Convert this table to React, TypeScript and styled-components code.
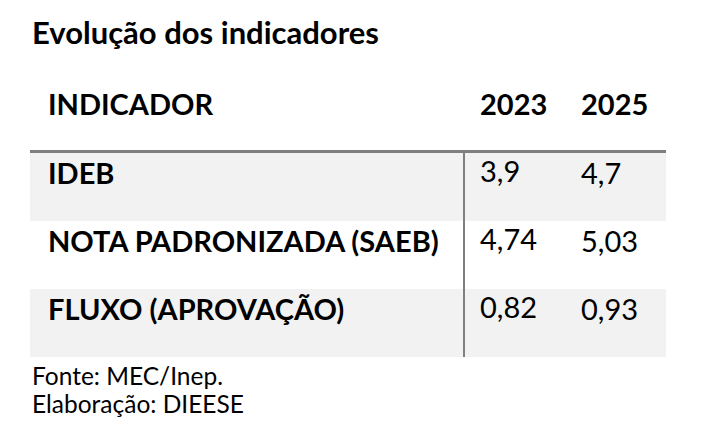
import React from 'react';
import styled, { createGlobalStyle } from 'styled-components';

const GlobalStyle = createGlobalStyle`
	html, body {
		margin: 0;
		padding: 0;
		background: #ffffff;
	}

	body {
		font-family: Lato, "Open Sans", "Liberation Sans", sans-serif;
		color: #000000;
	}
`;

const COLUMNS = '433px 101px 102px';

const Page = styled.main`
	width: 636px;
	padding: 15px 0 0 30px;
`;

const Title = styled.h1`
	margin: 0;
	padding-left: 2px;
	font-size: 31px;
	line-height: 35px;
	font-weight: 700;
`;

const Table = styled.div`
	display: flex;
	flex-direction: column;
`;

const Row = styled.div<{ $shaded?: boolean; $head?: boolean }>`
	display: grid;
	grid-template-columns: ${COLUMNS};
	box-sizing: border-box;
	height: ${props => (props.$head ? '103px' : '68px')};
	padding-top: ${props => (props.$head ? '36px' : '2px')};
	background: ${props => (props.$shaded ? '#f2f2f2' : '#ffffff')};
	border-bottom: ${props => (props.$head ? '3px solid #7f7f7f' : 'none')};
	font-size: 29px;
	line-height: 35px;
	font-weight: ${props => (props.$head ? 700 : 400)};
`;

const Cell = styled.div<{ $label?: boolean; $divider?: boolean; $pad: number }>`
	box-sizing: border-box;
	padding-left: ${props => props.$pad}px;
	font-weight: ${props => (props.$label ? 700 : 'inherit')};
	border-left: ${props => (props.$divider ? '2px solid #7f7f7f' : 'none')};
	margin-top: ${props => (props.$divider ? '-2px' : '0')};
	white-space: nowrap;
`;

const Notes = styled.div`
	margin-top: 5px;
	padding-left: 2px;
	font-size: 24.5px;
	line-height: 27.5px;
`;

type Indicator = {
	name: string;
	y2023: string;
	y2025: string;
};

const indicators: Indicator[] = [
	{ name: 'IDEB', y2023: '3,9', y2025: '4,7' },
	{ name: 'NOTA PADRONIZADA (SAEB)', y2023: '4,74', y2025: '5,03' },
	{ name: 'FLUXO (APROVAÇÃO)', y2023: '0,82', y2025: '0,93' },
];

const App = () => {
	return (
		<>
			<GlobalStyle />
			<Page>
				<Title>Evolução dos indicadores</Title>
				<Table>
					<Row $head>
						<Cell $pad={18}>INDICADOR</Cell>
						<Cell $pad={17}>2023</Cell>
						<Cell $pad={17}>2025</Cell>
					</Row>
					{indicators.map((item, i) => (
						<Row key={item.name} $shaded={i % 2 === 0}>
							<Cell $label $pad={18}>{item.name}</Cell>
							<Cell $divider $pad={15}>{item.y2023}</Cell>
							<Cell $pad={17}>{item.y2025}</Cell>
						</Row>
					))}
				</Table>
				<Notes>
					<div>Fonte: MEC/Inep.</div>
					<div>Elaboração: DIEESE</div>
				</Notes>
			</Page>
		</>
	);
};

export default App;
